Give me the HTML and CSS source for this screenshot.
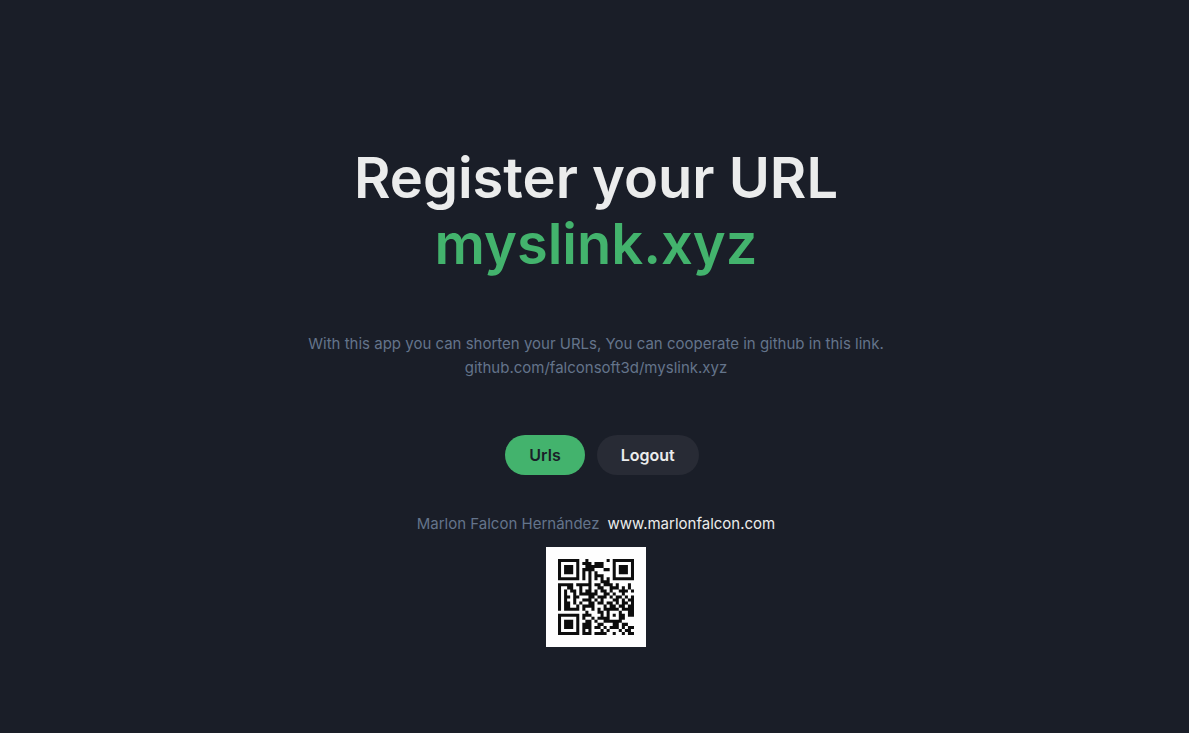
FILE: index.html
```html
<!DOCTYPE html>
<html lang="en">
<head>
<meta charset="utf-8">
<meta name="viewport" content="width=device-width, initial-scale=1">
<title>myslink.xyz</title>
<link rel="stylesheet" href="styles.css">
</head>
<body>
<main class="hero">
  <h1 class="title">Register your URL <span class="brand">myslink.xyz</span></h1>
  <p class="intro">With this app you can shorten your URLs, You can cooperate in github in this link. <a class="repo" href="https://github.com/falconsoft3d/myslink.xyz">github.com/falconsoft3d/myslink.xyz</a></p>
  <div class="actions">
    <button class="btn btn-primary" type="button">Urls</button>
    <button class="btn" type="button">Logout</button>
  </div>
  <footer class="credit">
    <p class="author">Marlon Falcon Hernández <a class="site" href="http://www.marlonfalcon.com">www.marlonfalcon.com</a></p>
    <svg class="qr" viewBox="0 0 100 100" role="img" aria-label="QR code">
      <filter id="soften"><feGaussianBlur stdDeviation="0.15"/></filter>
      <path class="qr-cells" fill="#0c0c0c" filter="url(#soften)" transform="translate(12 12) scale(3.04)"/>
    </svg>
  </footer>
</main>
<script src="qr.js"></script>
</body>
</html>
```

FILE: styles.css
```css
* { box-sizing: border-box; }
body {
  margin: 0;
  min-height: 100vh;
  background: #1a1e28;
  color: #ebecec;
  font-family: Inter, "Liberation Sans", sans-serif;
  font-size: 15px;
  line-height: 24px;
}
.hero {
  display: flex;
  flex-direction: column;
  align-items: center;
  padding: 145px 24px 80px 27px;
  text-align: center;
}
.title {
  margin: 0;
  font-size: 56px;
  font-weight: 600;
  line-height: 66px;
}
.brand, .repo { display: block; }
.brand { color: #43b36d; }
.intro { margin: 55px 0 0; color: #64748b; }
.repo { color: inherit; text-decoration: none; }
.actions { display: flex; gap: 12px; margin: 55px 0 37px 12px; }
.btn {
  height: 40px;
  padding: 0 24px;
  border: 0;
  border-radius: 20px;
  background: #282b35;
  color: #ebecec;
  font: inherit;
  font-size: 16px;
  font-weight: 600;
}
.btn-primary { background: #43b36d; color: #1a1e28; }
.credit { display: flex; flex-direction: column; align-items: center; gap: 11px; }
.author { display: flex; gap: 8px; margin: 0; color: #64748b; }
.site { color: #ebecec; text-decoration: none; }
.qr { display: block; width: 100px; height: 100px; background: #fefefe; }
```

FILE: qr.js
```js
const rows = [
  "1111111001000000101111111",
  "1000001011101110001000001",
  "1011101001111110001011101",
  "1011101011110001101011101",
  "1011101010101000001011101",
  "1000001010101110001000001",
  "1111111010101010101111111",
  "0000000000100011100000000",
  "1111101111101101110100010",
  "1001100100100110011101010",
  "1010110101101011010011101",
  "1010010111111001101001000",
  "1011011000110111010110101",
  "1010010011101010001101011",
  "1011010100110110110101101",
  "1011001011110001011011011",
  "1011111010010101111101111",
  "0000000001000110100010011",
  "1111111011100010101011011",
  "1000001010010111100011000",
  "1011101001101001111110000",
  "1011101011100110001101100",
  "1011101011101101011101011",
  "1000001010100010100010110",
  "1111111011101111001001011"
];
const d = rows.map((row, y) =>
  [...row].map((cell, x) => cell === "1" ? `M${x} ${y}h1v1h-1z` : "").join("")
).join("");
document.querySelector(".qr-cells").setAttribute("d", d);
```
